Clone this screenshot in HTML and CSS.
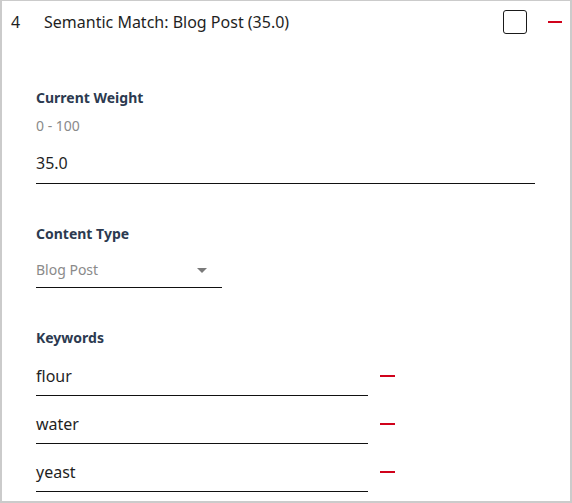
FILE: index.html
```html
<!DOCTYPE html>
<html>
<head>
<meta charset="utf-8">
<link rel="stylesheet" href="styles.css">
</head>
<body>
<div class="card">
  <div class="header">
    <span class="num">4</span>
    <span class="title">Semantic Match: Blog Post (35.0)</span>
    <span class="checkbox"></span>
    <span class="minus head-minus"></span>
  </div>
  <div class="body">
    <div class="label first">Current Weight</div>
    <div class="hint">0 - 100</div>
    <div class="field weight">35.0</div>

    <div class="label">Content Type</div>
    <div class="select">
      <span>Blog Post</span>
      <svg class="arrow" width="10" height="5" viewBox="0 0 10 5"><path d="M0 0H10L5 5Z" fill="#7a7a7a"/></svg>
    </div>

    <div class="label">Keywords</div>
    <div class="kw-row"><div class="field kw">flour</div><span class="minus"></span></div>
    <div class="kw-row"><div class="field kw">water</div><span class="minus"></span></div>
    <div class="kw-row"><div class="field kw">yeast</div><span class="minus"></span></div>
  </div>
</div>
</body>
</html>
```
FILE: styles.css
```css
html, body {
  margin: 0;
  padding: 0;
  background: #fff;
}
.card {
  box-sizing: border-box;
  width: 572px;
  height: 503px;
  border: 2px solid #cbcbcb;
  border-top-width: 1px;
  font-family: "Noto Sans", "Open Sans", sans-serif;
  color: #1f1f1f;
  overflow: hidden;
}
.header {
  display: flex;
  align-items: center;
  height: 41px;
  padding-left: 9px;
  padding-right: 8px;
}
.num {
  width: 33px;
  font-size: 16px;
}
.title {
  flex: 1;
  font-size: 16px;
}
.checkbox {
  box-sizing: border-box;
  width: 24px;
  height: 24px;
  border: 1.5px solid #1a1a1a;
  border-radius: 3px;
  margin-right: 21px;
}
.minus {
  display: block;
  width: 15px;
  height: 2px;
  background: #d0021b;
}
.head-minus {
  width: 14px;
}
.body {
  padding-left: 34px;
}
.label {
  font-size: 14px;
  line-height: 20px;
  font-weight: 700;
  color: #2c3a50;
  margin-top: 40px;
}
.label.first {
  margin-top: 46px;
}
.hint {
  font-size: 14px;
  line-height: 18px;
  color: #8a8a8a;
  margin-top: 9px;
}
.field {
  font-size: 16px;
  line-height: 24px;
  border-bottom: 1px solid #111;
  margin-top: 16px;
}
.weight {
  width: 499px;
  padding-bottom: 8px;
}
.select {
  display: flex;
  align-items: center;
  justify-content: space-between;
  width: 186px;
  box-sizing: border-box;
  padding-right: 15px;
  font-size: 14px;
  line-height: 20px;
  color: #8a8a8a;
  margin-top: 16px;
  padding-bottom: 7px;
  border-bottom: 1px solid #111;
}
.arrow {
  display: block;
}
.kw-row {
  display: flex;
  align-items: center;
  gap: 12px;
}
.kw {
  width: 332px;
  padding-bottom: 7px;
}
.kw-row .minus {
  margin-top: 8px;
}
```
